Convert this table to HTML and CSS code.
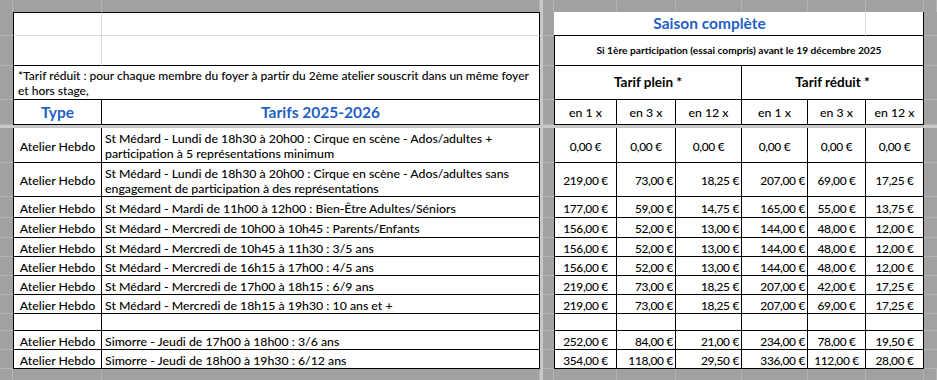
FILE: index.html
```html
<!DOCTYPE html>
<html lang="fr">
<head>
<meta charset="utf-8">
<title>Tarifs 2025-2026</title>
<link rel="stylesheet" href="styles.css">
</head>
<body>
<div class="sheet">
  <!-- top gray band -->
  <div class="band"></div><div class="band"></div><div class="band"></div><div class="split"></div><div class="band"></div>
  <div class="band"></div><div class="band"></div><div class="band"></div><div class="band"></div><div class="band"></div><div class="band"></div><div class="band"></div>

  <!-- R1 -->
  <div class="strip"></div>
  <div class="cell bl bt grid-r grid-b"></div>
  <div class="cell bt grid-b"></div>
  <div class="split"></div><div class="strip"></div>
  <div class="cell title span5 grid-r">Saison complète</div>
  <div class="cell"></div>
  <div class="strip"></div>

  <!-- R2 -->
  <div class="strip"></div>
  <div class="cell bl grid-r"></div>
  <div class="cell"></div>
  <div class="split"></div><div class="strip"></div>
  <div class="cell bl tiny span6">Si 1ère participation (essai compris) avant le 19 décembre 2025</div>
  <div class="strip"></div>

  <!-- R3 -->
  <div class="strip"></div>
  <div class="cell bl left note span2"><span>*Tarif réduit : pour chaque membre du foyer à partir du 2ème atelier souscrit dans un même foyer<br>et hors stage,</span></div>
  <div class="split"></div><div class="strip"></div>
  <div class="cell bl sub span3">Tarif plein *</div>
  <div class="cell sub span3">Tarif réduit *</div>
  <div class="strip"></div>

  <!-- R4 -->
  <div class="strip"></div>
  <div class="cell bl title">Type</div>
  <div class="cell title">Tarifs 2025-2026</div>
  <div class="split"></div><div class="strip"></div>
  <div class="cell bl">en 1 x</div><div class="cell">en 3 x</div><div class="cell">en 12 x</div>
  <div class="cell">en 1 x</div><div class="cell">en 3 x</div><div class="cell">en 12 x</div>
  <div class="strip"></div>

  <!-- frozen split -->
  <div class="split"></div><div class="split"></div><div class="split"></div><div class="split"></div><div class="split"></div><div class="split"></div>
  <div class="split"></div><div class="split"></div><div class="split"></div><div class="split"></div><div class="split"></div><div class="split"></div>

  <!-- D1 -->
  <div class="strip"></div>
  <div class="cell bl d">Atelier Hebdo</div>
  <div class="cell left d"><span>St Médard - Lundi de 18h30 à 20h00 : Cirque en scène - Ados/adultes +<br>participation à 5 représentations minimum</span></div>
  <div class="split"></div><div class="strip"></div>
  <div class="cell bl d num">0,00 €</div><div class="cell d num">0,00 €</div><div class="cell d num">0,00 €</div>
  <div class="cell d num">0,00 €</div><div class="cell d num">0,00 €</div><div class="cell d num">0,00 €</div>
  <div class="strip"></div>

  <!-- D2 -->
  <div class="strip"></div>
  <div class="cell bl d">Atelier Hebdo</div>
  <div class="cell left d"><span>St Médard - Lundi de 18h30 à 20h00 : Cirque en scène - Ados/adultes sans<br>engagement de participation à des représentations</span></div>
  <div class="split"></div><div class="strip"></div>
  <div class="cell bl d num">219,00 €</div><div class="cell right d num">73,00 €</div><div class="cell right d num">18,25 €</div>
  <div class="cell right d num">207,00 €</div><div class="cell d num">69,00 €</div><div class="cell d num">17,25 €</div>
  <div class="strip"></div>

  <!-- D3 -->
  <div class="strip"></div>
  <div class="cell bl d">Atelier Hebdo</div>
  <div class="cell left d">St Médard - Mardi de 11h00 à 12h00 : Bien-Être Adultes/Séniors</div>
  <div class="split"></div><div class="strip"></div>
  <div class="cell bl d num">177,00 €</div><div class="cell right d num">59,00 €</div><div class="cell right d num">14,75 €</div>
  <div class="cell right d num">165,00 €</div><div class="cell d num">55,00 €</div><div class="cell d num">13,75 €</div>
  <div class="strip"></div>

  <!-- D4 -->
  <div class="strip"></div>
  <div class="cell bl d">Atelier Hebdo</div>
  <div class="cell left d">St Médard - Mercredi de 10h00 à 10h45 : Parents/Enfants</div>
  <div class="split"></div><div class="strip"></div>
  <div class="cell bl d num">156,00 €</div><div class="cell right d num">52,00 €</div><div class="cell right d num">13,00 €</div>
  <div class="cell right d num">144,00 €</div><div class="cell d num">48,00 €</div><div class="cell d num">12,00 €</div>
  <div class="strip"></div>

  <!-- D5 -->
  <div class="strip"></div>
  <div class="cell bl d">Atelier Hebdo</div>
  <div class="cell left d">St Médard - Mercredi de 10h45 à 11h30 : 3/5 ans</div>
  <div class="split"></div><div class="strip"></div>
  <div class="cell bl d num">156,00 €</div><div class="cell right d num">52,00 €</div><div class="cell right d num">13,00 €</div>
  <div class="cell right d num">144,00 €</div><div class="cell d num">48,00 €</div><div class="cell d num">12,00 €</div>
  <div class="strip"></div>

  <!-- D6 -->
  <div class="strip"></div>
  <div class="cell bl d">Atelier Hebdo</div>
  <div class="cell left d">St Médard - Mercredi de 16h15 à 17h00 : 4/5 ans</div>
  <div class="split"></div><div class="strip"></div>
  <div class="cell bl d num">156,00 €</div><div class="cell right d num">52,00 €</div><div class="cell right d num">13,00 €</div>
  <div class="cell right d num">144,00 €</div><div class="cell d num">48,00 €</div><div class="cell d num">12,00 €</div>
  <div class="strip"></div>

  <!-- D7 -->
  <div class="strip"></div>
  <div class="cell bl d">Atelier Hebdo</div>
  <div class="cell left d">St Médard - Mercredi de 17h00 à 18h15 : 6/9 ans</div>
  <div class="split"></div><div class="strip"></div>
  <div class="cell bl d num">219,00 €</div><div class="cell right d num">73,00 €</div><div class="cell right d num">18,25 €</div>
  <div class="cell right d num">207,00 €</div><div class="cell d num">42,00 €</div><div class="cell d num">17,25 €</div>
  <div class="strip"></div>

  <!-- D8 -->
  <div class="strip"></div>
  <div class="cell bl d">Atelier Hebdo</div>
  <div class="cell left d">St Médard - Mercredi de 18h15 à 19h30 : 10 ans et +</div>
  <div class="split"></div><div class="strip"></div>
  <div class="cell bl d num">219,00 €</div><div class="cell right d num">73,00 €</div><div class="cell right d num">18,25 €</div>
  <div class="cell right d num">207,00 €</div><div class="cell d num">69,00 €</div><div class="cell d num">17,25 €</div>
  <div class="strip"></div>

  <!-- D9 empty -->
  <div class="strip"></div>
  <div class="cell bl"></div>
  <div class="cell"></div>
  <div class="split"></div><div class="strip"></div>
  <div class="cell bl"></div><div class="cell"></div><div class="cell"></div>
  <div class="cell"></div><div class="cell"></div><div class="cell"></div>
  <div class="strip"></div>

  <!-- D10 -->
  <div class="strip"></div>
  <div class="cell bl d">Atelier Hebdo</div>
  <div class="cell left d">Simorre - Jeudi de 17h00 à 18h00 : 3/6 ans</div>
  <div class="split"></div><div class="strip"></div>
  <div class="cell bl d num">252,00 €</div><div class="cell right d num">84,00 €</div><div class="cell right d num">21,00 €</div>
  <div class="cell right d num">234,00 €</div><div class="cell d num">78,00 €</div><div class="cell d num">19,50 €</div>
  <div class="strip"></div>

  <!-- D11 -->
  <div class="strip"></div>
  <div class="cell bl d">Atelier Hebdo</div>
  <div class="cell left d">Simorre - Jeudi de 18h00 à 19h30 : 6/12 ans</div>
  <div class="split"></div><div class="strip"></div>
  <div class="cell bl d num">354,00 €</div><div class="cell right d num">118,00 €</div><div class="cell right d num">29,50 €</div>
  <div class="cell right d num">336,00 €</div><div class="cell d num">112,00 €</div><div class="cell d num">28,00 €</div>
  <div class="strip"></div>

  <!-- bottom gray band -->
  <div class="band"></div><div class="band"></div><div class="band"></div><div class="split"></div><div class="band"></div>
  <div class="band"></div><div class="band"></div><div class="band"></div><div class="band"></div><div class="band"></div><div class="band"></div><div class="band"></div>
</div>
</body>
</html>
```

FILE: styles.css
```css
* { box-sizing: border-box; }

body {
  margin: 0;
  background: #ffffff;
}

.sheet {
  display: grid;
  grid-template-columns: 13px 89px 438px 3px 11px 63px 59px 66px 66px 58px 58px 13px;
  grid-template-rows: 12px 24px 30px 34px 25px 3px 35px 34px 21px 20px 19px 19px 19px 19px 17px 19px 19px 11px;
  width: 937px;
  height: 380px;
  font-family: "Lato", "Liberation Sans", sans-serif;
  font-size: 12.3px;
  font-weight: 500;
  color: #000000;
  background: #ffffff;
}

.band {
  background: #a1a1a1;
  border-right: 1px solid #b4b4b4;
}

.strip {
  background: #a1a1a1;
  border-bottom: 1px solid #b4b4b4;
}

.split {
  background: #c8c8c8;
}

.cell {
  display: flex;
  align-items: center;
  justify-content: center;
  padding: 0 4px;
  border-right: 1px solid #000000;
  border-bottom: 1px solid #000000;
  white-space: nowrap;
  overflow: hidden;
  line-height: 15px;
  background: #ffffff;
}

.bl { border-left: 1px solid #000000; }
.bt { border-top: 1px solid #000000; }
.grid-r { border-right-color: #dadada; }
.grid-b { border-bottom-color: #dadada; }

.span2 { grid-column: span 2; }
.span3 { grid-column: span 3; }
.span5 { grid-column: span 5; }
.span6 { grid-column: span 6; }

.left {
  justify-content: flex-start;
  padding-left: 3px;
}

.right {
  justify-content: flex-end;
  padding-right: 2px;
}

.d { padding-top: 2px; }

.num {
  font-size: 11.9px;
  letter-spacing: -0.3px;
}

.note {
  padding-top: 1px;
  padding-left: 4px;
  font-size: 12px;
}

.title {
  color: #1f5fc6;
  font-weight: 700;
  font-size: 15.5px;
}

.sub {
  font-weight: 700;
  font-size: 13.5px;
}

.tiny {
  font-weight: 700;
  font-size: 10.2px;
}
```
